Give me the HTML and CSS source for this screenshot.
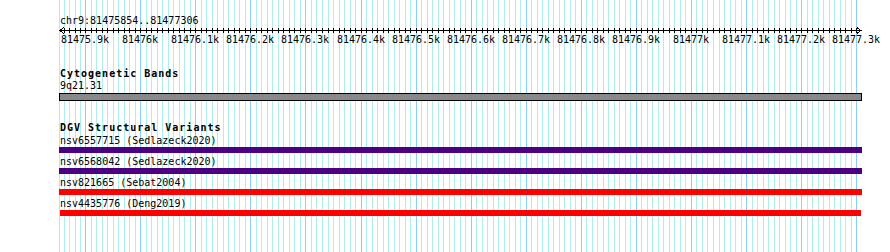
FILE: index.html
```html
<!DOCTYPE html>
<html>
<head>
<meta charset="utf-8">
<link rel="stylesheet" href="styles.css">
</head>
<body>
<div class="view">
  <svg class="grid" width="890" height="252" viewBox="0 0 890 252" aria-hidden="true">
    <path class="grid-minor" d="M59.5 0V252M64.5 0V252M69.5 0V252M75.5 0V252M80.5 0V252M91.5 0V252M96.5 0V252M102.5 0V252M107.5 0V252M113.5 0V252M118.5 0V252M124.5 0V252M129.5 0V252M135.5 0V252M146.5 0V252M151.5 0V252M157.5 0V252M162.5 0V252M168.5 0V252M173.5 0V252M179.5 0V252M184.5 0V252M190.5 0V252M201.5 0V252M206.5 0V252M212.5 0V252M217.5 0V252M223.5 0V252M228.5 0V252M234.5 0V252M239.5 0V252M245.5 0V252M256.5 0V252M261.5 0V252M267.5 0V252M272.5 0V252M278.5 0V252M283.5 0V252M289.5 0V252M294.5 0V252M300.5 0V252M311.5 0V252M316.5 0V252M322.5 0V252M328.5 0V252M333.5 0V252M339.5 0V252M344.5 0V252M350.5 0V252M355.5 0V252M366.5 0V252M372.5 0V252M377.5 0V252M383.5 0V252M388.5 0V252M394.5 0V252M399.5 0V252M405.5 0V252M410.5 0V252M421.5 0V252M427.5 0V252M432.5 0V252M438.5 0V252M443.5 0V252M449.5 0V252M454.5 0V252M460.5 0V252M465.5 0V252M476.5 0V252M482.5 0V252M487.5 0V252M493.5 0V252M498.5 0V252M504.5 0V252M509.5 0V252M515.5 0V252M520.5 0V252M531.5 0V252M537.5 0V252M542.5 0V252M548.5 0V252M553.5 0V252M559.5 0V252M564.5 0V252M570.5 0V252M575.5 0V252M586.5 0V252M592.5 0V252M597.5 0V252M603.5 0V252M608.5 0V252M614.5 0V252M619.5 0V252M625.5 0V252M630.5 0V252M641.5 0V252M647.5 0V252M652.5 0V252M658.5 0V252M663.5 0V252M669.5 0V252M674.5 0V252M680.5 0V252M685.5 0V252M696.5 0V252M702.5 0V252M707.5 0V252M713.5 0V252M719.5 0V252M724.5 0V252M730.5 0V252M735.5 0V252M741.5 0V252M752.5 0V252M757.5 0V252M763.5 0V252M768.5 0V252M774.5 0V252M779.5 0V252M785.5 0V252M790.5 0V252M796.5 0V252M807.5 0V252M812.5 0V252M818.5 0V252M823.5 0V252M829.5 0V252M834.5 0V252M840.5 0V252M845.5 0V252M851.5 0V252"/>
    <path class="grid-major" d="M85.5 0V252M140.5 0V252M195.5 0V252M250.5 0V252M305.5 0V252M361.5 0V252M416.5 0V252M471.5 0V252M526.5 0V252M581.5 0V252M636.5 0V252M691.5 0V252M746.5 0V252M801.5 0V252M856.5 0V252"/>
  </svg>

  <div class="tracks">
    <div class="ruler">
      <div class="locus">chr9:81475854..81477306</div>
      <svg class="axis" width="803" height="20" viewBox="59 26 803 20">
        <path class="axis-line" d="M60 30.5H861"/>
        <path class="axis-line" d="M64 27.5L60 30.5L64 33.5M857 27.5L861 30.5L857 33.5"/>
        <path class="axis-line" d="M64.5 28V33M69.5 28V33M75.5 28V33M80.5 28V33M85.5 28V33M91.5 28V33M96.5 28V33M102.5 28V33M107.5 28V33M113.5 28V33M118.5 28V33M124.5 28V33M129.5 28V33M135.5 28V33M140.5 28V33M146.5 28V33M151.5 28V33M157.5 28V33M162.5 28V33M168.5 28V33M173.5 28V33M179.5 28V33M184.5 28V33M190.5 28V33M195.5 28V33M201.5 28V33M206.5 28V33M212.5 28V33M217.5 28V33M223.5 28V33M228.5 28V33M234.5 28V33M239.5 28V33M245.5 28V33M250.5 28V33M256.5 28V33M261.5 28V33M267.5 28V33M272.5 28V33M278.5 28V33M283.5 28V33M289.5 28V33M294.5 28V33M300.5 28V33M305.5 28V33M311.5 28V33M316.5 28V33M322.5 28V33M328.5 28V33M333.5 28V33M339.5 28V33M344.5 28V33M350.5 28V33M355.5 28V33M361.5 28V33M366.5 28V33M372.5 28V33M377.5 28V33M383.5 28V33M388.5 28V33M394.5 28V33M399.5 28V33M405.5 28V33M410.5 28V33M416.5 28V33M421.5 28V33M427.5 28V33M432.5 28V33M438.5 28V33M443.5 28V33M449.5 28V33M454.5 28V33M460.5 28V33M465.5 28V33M471.5 28V33M476.5 28V33M482.5 28V33M487.5 28V33M493.5 28V33M498.5 28V33M504.5 28V33M509.5 28V33M515.5 28V33M520.5 28V33M526.5 28V33M531.5 28V33M537.5 28V33M542.5 28V33M548.5 28V33M553.5 28V33M559.5 28V33M564.5 28V33M570.5 28V33M575.5 28V33M581.5 28V33M586.5 28V33M592.5 28V33M597.5 28V33M603.5 28V33M608.5 28V33M614.5 28V33M619.5 28V33M625.5 28V33M630.5 28V33M636.5 28V33M641.5 28V33M647.5 28V33M652.5 28V33M658.5 28V33M663.5 28V33M669.5 28V33M674.5 28V33M680.5 28V33M685.5 28V33M691.5 28V33M696.5 28V33M702.5 28V33M707.5 28V33M713.5 28V33M719.5 28V33M724.5 28V33M730.5 28V33M735.5 28V33M741.5 28V33M746.5 28V33M752.5 28V33M757.5 28V33M763.5 28V33M768.5 28V33M774.5 28V33M779.5 28V33M785.5 28V33M790.5 28V33M796.5 28V33M801.5 28V33M807.5 28V33M812.5 28V33M818.5 28V33M823.5 28V33M829.5 28V33M834.5 28V33M840.5 28V33M845.5 28V33M851.5 28V33M856.5 28V33"/>
        <g class="axis-labels">
          <text x="85" y="43">81475.9k</text>
          <text x="140" y="43">81476k</text>
          <text x="195" y="43">81476.1k</text>
          <text x="250" y="43">81476.2k</text>
          <text x="305" y="43">81476.3k</text>
          <text x="361" y="43">81476.4k</text>
          <text x="416" y="43">81476.5k</text>
          <text x="471" y="43">81476.6k</text>
          <text x="526" y="43">81476.7k</text>
          <text x="581" y="43">81476.8k</text>
          <text x="636" y="43">81476.9k</text>
          <text x="691" y="43">81477k</text>
          <text x="746" y="43">81477.1k</text>
          <text x="801" y="43">81477.2k</text>
          <text x="856" y="43">81477.3k</text>
        </g>
      </svg>
    </div>

    <section class="track track-cyto">
      <h2 class="track-title">Cytogenetic Bands</h2>
      <div class="feature-label feature-label-first">9q21.31</div>
      <div class="band"></div>
    </section>

    <section class="track track-dgv">
      <h2 class="track-title">DGV Structural Variants</h2>
      <div class="feature">
        <div class="feature-label">nsv6557715 (Sedlazeck2020)</div>
        <div class="bar bar-purple"></div>
      </div>
      <div class="feature">
        <div class="feature-label">nsv6568042 (Sedlazeck2020)</div>
        <div class="bar bar-purple"></div>
      </div>
      <div class="feature">
        <div class="feature-label">nsv821665 (Sebat2004)</div>
        <div class="bar bar-red"></div>
      </div>
      <div class="feature">
        <div class="feature-label">nsv4435776 (Deng2019)</div>
        <div class="bar bar-red bar-inset"></div>
      </div>
    </section>
  </div>
</div>
</body>
</html>
```

FILE: styles.css
```css
html, body {
  margin: 0;
  padding: 0;
  background: #ffffff;
}

.view {
  position: relative;
  width: 890px;
  height: 252px;
  overflow: hidden;
  font-family: "DejaVu Sans Mono", "Liberation Mono", monospace;
  font-size: 10px;
  line-height: 11px;
  color: #000000;
}

.grid {
  position: absolute;
  left: 0;
  top: 0;
  z-index: 0;
  shape-rendering: crispEdges;
}

.grid-minor {
  stroke: #afeeee;
  stroke-width: 1;
  fill: none;
}

.grid-major {
  stroke: #87cefa;
  stroke-width: 1;
  fill: none;
}

.tracks {
  position: relative;
  z-index: 1;
  display: flex;
  flex-direction: column;
  padding: 15px 0 0 59px;
  width: 803px;
}

.locus {
  padding-left: 1px;
  height: 11px;
}

.axis {
  display: block;
  overflow: visible;
}

.axis-line {
  stroke: #000000;
  stroke-width: 1;
  fill: none;
  shape-rendering: crispEdges;
}

.axis-labels text {
  font-family: "DejaVu Sans Mono", "Liberation Mono", monospace;
  font-size: 10px;
  text-anchor: middle;
  fill: #000000;
}

.track {
  display: flex;
  flex-direction: column;
}

.track-cyto {
  margin-top: 22px;
}

.track-dgv {
  margin-top: 21px;
}

.track-title {
  margin: 0;
  padding-left: 1px;
  font-size: 10px;
  line-height: 11px;
  font-weight: bold;
  letter-spacing: 1px;
}

.feature-label {
  padding-left: 1px;
  height: 11px;
  white-space: nowrap;
}

.feature-label-first {
  margin-top: 1px;
}

.band {
  margin-top: 2px;
  height: 8px;
  box-sizing: border-box;
  background: #898989;
  border: 1px solid #000000;
}

.feature {
  display: flex;
  flex-direction: column;
  margin-top: 3px;
}

.feature:first-of-type {
  margin-top: 2px;
}

.bar {
  margin-top: 1px;
  height: 6px;
}

.bar-purple {
  background: #4b0082;
}

.bar-red {
  background: #ff0000;
}

.bar-inset {
  margin-left: 1px;
  margin-right: 1px;
}
```
